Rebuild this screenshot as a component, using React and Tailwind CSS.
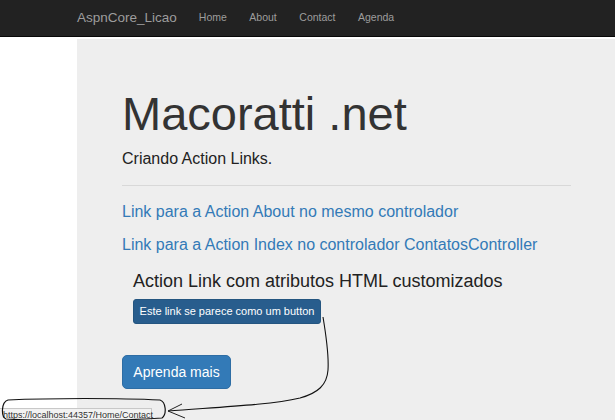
import React from 'react'

const navItems = ['Home', 'About', 'Contact', 'Agenda']

const App = () => {
  return (
    <div
      className="relative h-[420px] w-[615px] overflow-hidden bg-white"
      style={{ fontFamily: '"Liberation Sans", Arial, sans-serif' }}
    >
      <nav className="flex h-[37px] items-center border-b border-[#080808] bg-[#222] pl-[77px]">
        <a href="#" className="text-[13.5px] text-[#9d9d9d]">
          AspnCore_Licao
        </a>
        <ul className="ml-[22px] flex gap-[22.5px] text-[10.5px] text-[#9d9d9d]">
          {navItems.map((item) => (
            <li key={item}>
              <a href="#">{item}</a>
            </li>
          ))}
        </ul>
      </nav>

      <div className="mt-[2px] flex h-[381px]">
        <div className="w-[77px] bg-white" />
        <div className="flex-1 bg-[#eee] pt-[49px] pl-[45px] pr-[44px]">
          <h1 className="text-[47px] leading-[1.1] text-[#333]">Macoratti .net</h1>
          <p className="mt-[8px] text-[16px] leading-[22.86px] text-[#222]">
            Criando Action Links.
          </p>
          <hr className="mt-[14px] border-t border-[#d8d8d8]" />
          <div className="mt-[15px] flex flex-col gap-[10.5px] text-[16px] leading-[22.86px] text-[#337ab7]">
            <a href="#">Link para a Action About no mesmo controlador</a>
            <a href="#">Link para a Action Index no controlador ContatosController</a>
          </div>
          <div className="mt-[15.5px] pl-[11px]">
            <h3 className="text-[18px] leading-[1.1] text-[#222]">
              Action Link com atributos HTML customizados
            </h3>
            <a
              href="#"
              className="mt-[7px] flex h-[25px] w-[188px] items-center justify-center rounded-[3px] border border-[#245580] bg-[#285d8d] text-[11px] text-white"
            >
              Este link se parece como um button
            </a>
          </div>
          <a
            href="#"
            className="mt-[31px] flex h-[34px] w-[109px] items-center justify-center rounded-[5px] border border-[#2e6da4] bg-[#337ab7] text-[14px] text-white"
          >
            Aprenda mais
          </a>
        </div>
      </div>

      {/* browser status bar */}
      <div className="absolute bottom-0 left-0 h-[12px] w-[152px] border-t border-r border-[#c8c8c8] bg-[#f2f2f2] pl-[3px] text-[9px] leading-[12px] text-[#333]">
        https://localhost:44357/Home/Contact
      </div>

      {/* hand-drawn annotation */}
      <svg className="pointer-events-none absolute inset-0" width="615" height="420" fill="none">
        <path
          d="M323 317 C326 335 329 355 328 370 C327 385 318 393 300 398 C270 405 220 407 168 411"
          stroke="#111"
          strokeWidth="1.1"
        />
        <path d="M182 404 L168 411 L185 418" stroke="#222" strokeWidth="1" />
        <path
          d="M8 400 C50 398 120 398 160 400 C166 402 167 414 162 418 C120 421 40 421 6 419 C1 417 1 402 8 400 Z"
          stroke="#111"
          strokeWidth="1.2"
        />
      </svg>
    </div>
  )
}

export default App
